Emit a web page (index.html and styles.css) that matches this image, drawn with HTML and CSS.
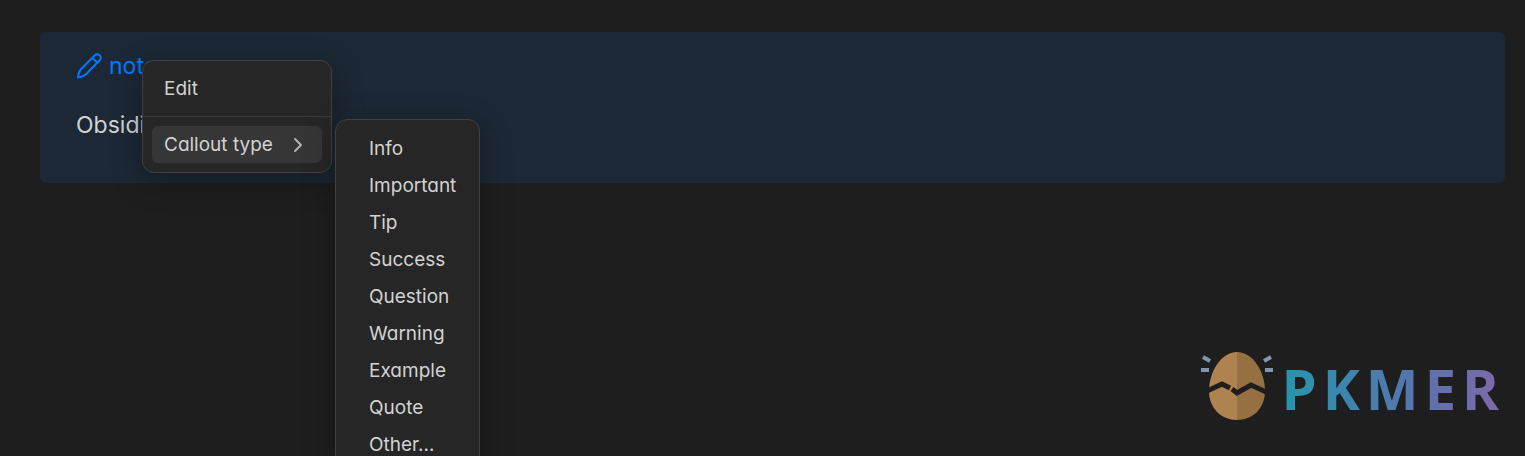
FILE: index.html
```html
<!DOCTYPE html>
<html lang="en">
<head>
  <meta charset="utf-8">
  <title>Callout menu</title>
  <link rel="stylesheet" href="styles.css">
</head>
<body>
  <div class="callout">
    <div class="callout-title">
      <svg class="pencil" viewBox="0 0 26 26" fill="none" stroke="currentColor" stroke-width="2" stroke-linecap="round" stroke-linejoin="round">
        <path d="M18.6 2.4c1.6-1.4 3.6-1.3 4.9-.1 1.5 1.4 1.5 3.5.1 5L10 21.3c-2.3 2.3-5.2 2.7-8 3.2.4-2.9.7-5.9 3-8.3z"/>
        <path d="M16.5 5l4.8 4.6"/>
      </svg>
      <span>note</span>
    </div>
    <p class="callout-text">Obsidian</p>

    <!-- context menu -->
    <div class="menu context-menu">
      <button class="menu-item">Edit</button>
      <hr>
      <button class="menu-item selected">
        Callout type
        <svg class="chevron" viewBox="0 0 10 16" fill="none" stroke="currentColor" stroke-width="2" stroke-linecap="round" stroke-linejoin="round">
          <path d="M2 2l6 6-6 6"/>
        </svg>
      </button>
    </div>

    <!-- callout types -->
    <div class="menu submenu">
      <button class="menu-item">Info</button>
      <button class="menu-item">Important</button>
      <button class="menu-item">Tip</button>
      <button class="menu-item">Success</button>
      <button class="menu-item">Question</button>
      <button class="menu-item">Warning</button>
      <button class="menu-item">Example</button>
      <button class="menu-item">Quote</button>
      <button class="menu-item">Other…</button>
    </div>
  </div>

  <div class="logo">
    <svg class="egg" viewBox="0 0 74 70">
      <path fill="#ae8350" d="M37 1C21 1 9 21 9 40c0 17 12 29 28 29z"/>
      <path fill="#966f43" d="M37 1c16 0 28 20 28 39 0 17-12 29-28 29z"/>
      <path fill="none" stroke="#1e1e1e" stroke-width="5" d="M7 40l15-7 8 4M32 38l5 4 14-8 15 7"/>
      <path fill="none" stroke="#8195ad" stroke-width="4" d="M3 6l7 4M1 19h8M71 6l-7 4M73 19h-8"/>
    </svg>
    <span class="logo-text">PKMER</span>
  </div>
</body>
</html>
```

FILE: styles.css
```css
* {
  box-sizing: border-box;
}

body {
  margin: 0;
  padding: 32px 20px 0 40px;
  height: 100vh;
  overflow: hidden;
  background: #1e1e1e;
  color: #d2d2d2;
  font-family: Inter, "Noto Sans", sans-serif;
  font-feature-settings: "cv11";
}

.callout {
  position: relative;
  padding: 16px 36px 40px;
  border-radius: 6px;
  background: #1c2835;
  font-size: 23px;
}

.callout-title {
  display: flex;
  align-items: center;
  gap: 7px;
  line-height: 36px;
  color: #027aff;
}

.pencil {
  width: 26px;
  height: 26px;
}

.callout-text {
  margin: 23px 0 0;
  line-height: 36px;
}

.menu {
  position: absolute;
  padding: 9px;
  border: 1px solid #404040;
  border-radius: 12px;
  background: #262626;
  box-shadow: 0 8px 32px rgba(0, 0, 0, 0.3);
}

.menu-item {
  display: flex;
  align-items: center;
  width: 100%;
  height: 37px;
  padding: 0 12px;
  border: none;
  border-radius: 6px;
  background: none;
  color: inherit;
  font-family: inherit;
  font-feature-settings: inherit;
  font-size: 19px;
  white-space: nowrap;
  cursor: pointer;
}

.menu-item:hover,
.menu-item.selected {
  background: #363636;
}

.menu hr {
  margin: 9px -9px;
  border: none;
  border-top: 1px solid #3a3a3a;
}

.context-menu {
  top: 28px;
  left: 102px;
  width: 190px;
}

.chevron {
  width: 10px;
  height: 16px;
  margin-left: auto;
  margin-right: 7px;
  color: #b3b3b3;
}

.submenu {
  top: 87px;
  left: 295px;
  width: 145px;
  padding-top: 10px;
}

.submenu .menu-item {
  padding: 0 24px;
}

.logo {
  position: absolute;
  right: 20px;
  bottom: 31px;
  display: flex;
  align-items: flex-start;
  gap: 8px;
}

.egg {
  width: 74px;
  height: 70px;
}

.logo-text {
  font-family: "Open Sans", sans-serif;
  font-size: 56px;
  font-weight: 700;
  line-height: 74px;
  letter-spacing: 6px;
  color: transparent;
  background: linear-gradient(90deg, #2596ad, #5873ad 60%, #8069aa);
  -webkit-background-clip: text;
  background-clip: text;
}
```
